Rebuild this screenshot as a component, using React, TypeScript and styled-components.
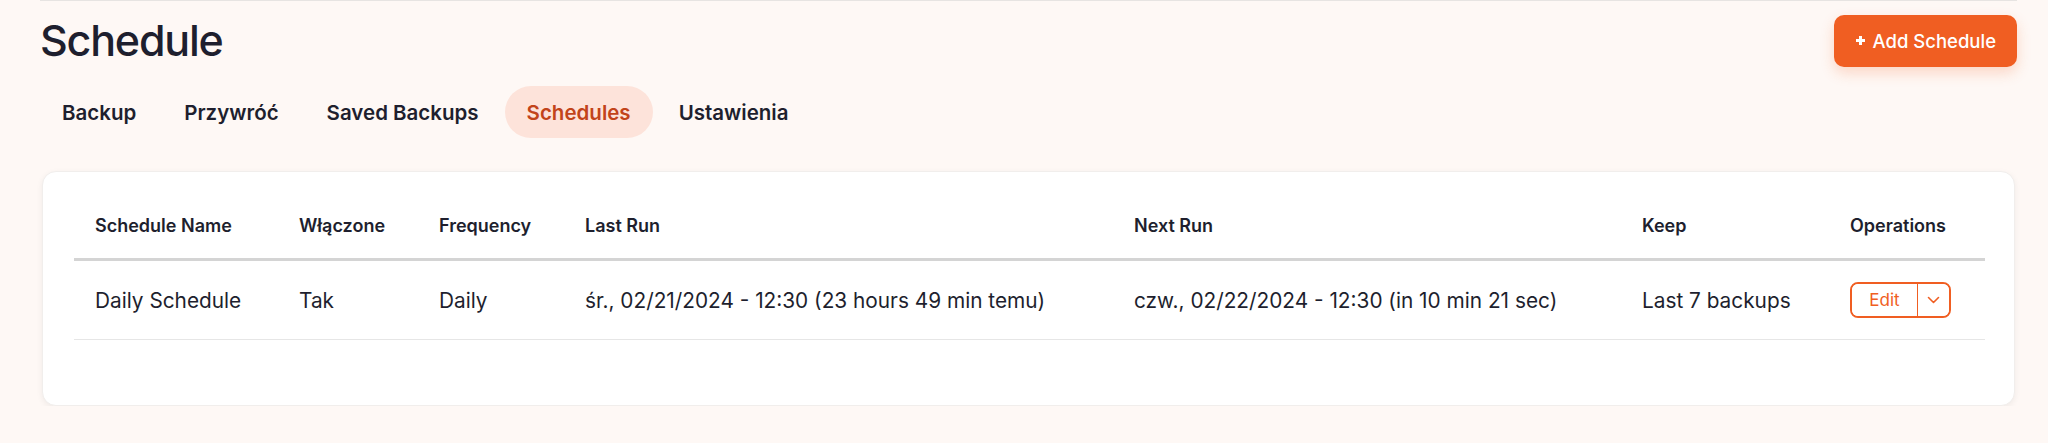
import React from "react";
import styled, { createGlobalStyle } from "styled-components";

const GlobalStyle = createGlobalStyle`
  body {
    margin: 0;
    background: #fef8f5;
    font-family: Inter, "Noto Sans", "Liberation Sans", sans-serif;
    color: #1e1f2e;
  }
`;

const Page = styled.div`
  padding: 0 31px 0 40px;
`;

const Header = styled.header`
  display: flex;
  align-items: center;
  justify-content: space-between;
  border-top: 1px solid #e7e4e2;
  padding-top: 13px;
`;

const Title = styled.h1`
  margin: 0;
  font-size: 43px;
  line-height: 53px;
  font-weight: 500;
  letter-spacing: -1.2px;
`;

const PrimaryButton = styled.button`
  display: flex;
  align-items: center;
  gap: 7px;
  height: 52px;
  padding: 0 21px;
  border: none;
  border-radius: 10px;
  background: #f05e22;
  color: #fff;
  font-family: inherit;
  font-size: 18.5px;
  font-weight: 500;
  box-shadow: 0 6px 14px rgba(240, 94, 34, 0.22);
  cursor: pointer;
`;

const Tabs = styled.nav`
  display: flex;
  gap: 4px;
  margin-top: 19px;
`;

const Tab = styled.button<{ $active?: boolean }>`
  height: 52px;
  padding: 0 22px;
  border: none;
  border-radius: 26px;
  background: ${(p) => (p.$active ? "#fde3da" : "transparent")};
  color: ${(p) => (p.$active ? "#c2441a" : "#1e1f2e")};
  font-family: inherit;
  font-size: 20.5px;
  font-weight: 600;
  cursor: pointer;
`;

const Card = styled.section`
  margin: 33px 2px 0;
  padding: 30px 31px 65px;
  background: #fff;
  border: 1px solid #f1eeec;
  border-radius: 14px;
  box-shadow: 0 2px 6px rgba(0, 0, 0, 0.06);
`;

const Table = styled.table`
  width: 100%;
  border-collapse: collapse;
  table-layout: fixed;
`;

const Th = styled.th`
  text-align: left;
  padding: 10px 21px 19px;
  font-size: 18px;
  line-height: 27px;
  font-weight: 600;
  border-bottom: 3px solid #d4d4d4;
  white-space: nowrap;
`;

const Td = styled.td`
  height: 78px;
  padding: 0 21px;
  font-size: 20.8px;
  line-height: 31px;
  font-weight: 400;
  vertical-align: middle;
  border-bottom: 1px solid #e6e6e6;
  white-space: nowrap;
`;

const SplitButton = styled.div`
  display: inline-flex;
  height: 36px;
  border: 2px solid #f05e22;
  border-radius: 8px;
  box-sizing: border-box;
  overflow: hidden;
`;

const SplitMain = styled.button`
  width: 66px;
  border: none;
  border-right: 1px solid #f05e22;
  background: #fff;
  color: #f05e22;
  font-family: inherit;
  font-size: 17px;
  cursor: pointer;
`;

const SplitToggle = styled.button`
  width: 31px;
  display: flex;
  align-items: center;
  justify-content: center;
  border: none;
  background: #fff;
  padding: 0;
  cursor: pointer;
`;

const PlusIcon = () => (
  <svg width="11" height="11" viewBox="0 0 11 11">
    <path d="M5.5 1v9M1 5.5h9" stroke="#fff" strokeWidth="3" />
  </svg>
);

const ChevronIcon = () => (
  <svg width="13" height="8" viewBox="0 0 13 8" fill="none">
    <path d="M1.5 1.5l5 5 5-5" stroke="#f05e22" strokeWidth="1.6" strokeLinecap="round" strokeLinejoin="round" />
  </svg>
);

const columns = [
  { label: "Schedule Name", width: 204 },
  { label: "Włączone", width: 140 },
  { label: "Frequency", width: 146 },
  { label: "Last Run", width: 549 },
  { label: "Next Run", width: 508 },
  { label: "Keep", width: 208 },
  { label: "Operations", width: 156 },
];

const rows = [
  {
    name: "Daily Schedule",
    enabled: "Tak",
    frequency: "Daily",
    lastRun: "śr., 02/21/2024 - 12:30 (23 hours 49 min temu)",
    nextRun: "czw., 02/22/2024 - 12:30 (in 10 min 21 sec)",
    keep: "Last 7 backups",
  },
];

const tabs = ["Backup", "Przywróć", "Saved Backups", "Schedules", "Ustawienia"];

export default function App() {
  return (
    <>
      <GlobalStyle />
      <Page>
        <Header>
          <Title>Schedule</Title>
          <PrimaryButton>
            <PlusIcon />
            Add Schedule
          </PrimaryButton>
        </Header>

        <Tabs>
          {tabs.map((t) => (
            <Tab key={t} $active={t === "Schedules"}>
              {t}
            </Tab>
          ))}
        </Tabs>

        <Card>
          <Table>
            <colgroup>
              {columns.map((c) => (
                <col key={c.label} style={{ width: c.width }} />
              ))}
            </colgroup>
            <thead>
              <tr>
                {columns.map((c) => (
                  <Th key={c.label}>{c.label}</Th>
                ))}
              </tr>
            </thead>
            <tbody>
              {rows.map((r) => (
                <tr key={r.name}>
                  <Td>{r.name}</Td>
                  <Td>{r.enabled}</Td>
                  <Td>{r.frequency}</Td>
                  <Td>{r.lastRun}</Td>
                  <Td>{r.nextRun}</Td>
                  <Td>{r.keep}</Td>
                  <Td>
                    <SplitButton>
                      <SplitMain>Edit</SplitMain>
                      <SplitToggle>
                        <ChevronIcon />
                      </SplitToggle>
                    </SplitButton>
                  </Td>
                </tr>
              ))}
            </tbody>
          </Table>
        </Card>
      </Page>
    </>
  );
}
